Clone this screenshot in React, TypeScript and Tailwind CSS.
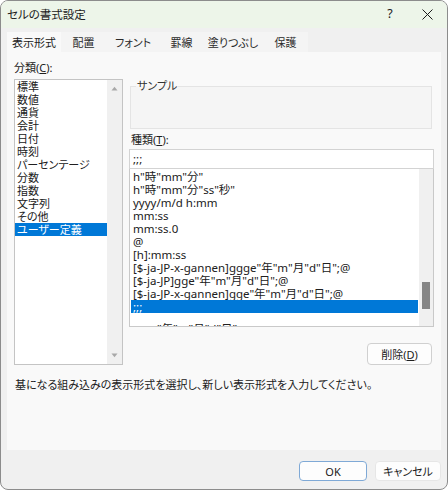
import React from "react";

const FONT = "font-['Noto_Sans','Noto_Sans_CJK_JP',sans-serif] [font-feature-settings:'palt']";

const TABS: { label: string; w: string }[] = [
  { label: "表示形式", w: "w-[54px]" },
  { label: "配置", w: "w-[45px]" },
  { label: "フォント", w: "w-[54px]" },
  { label: "罫線", w: "w-[43px]" },
  { label: "塗りつぶし", w: "w-[60px]" },
  { label: "保護", w: "w-[45px]" },
];

const CATEGORIES = [
  "標準",
  "数値",
  "通貨",
  "会計",
  "日付",
  "時刻",
  "パーセンテージ",
  "分数",
  "指数",
  "文字列",
  "その他",
  "ユーザー定義",
];

const FORMATS = [
  'h"時"mm"分"',
  'h"時"mm"分"ss"秒"',
  "yyyy/m/d h:mm",
  "mm:ss",
  "mm:ss.0",
  "@",
  "[h]:mm:ss",
  '[$-ja-JP-x-gannen]ggge"年"m"月"d"日";@',
  '[$-ja-JP]gge"年"m"月"d"日";@',
  '[$-ja-JP-x-gannen]gge"年"m"月"d"日";@',
  ";;;",
];

function Arrow({ up }: { up?: boolean }) {
  return (
    <svg width="7" height="5" viewBox="0 0 7 5" className="block">
      <path d={up ? "M0.5 4.5 L3.5 0.8 L6.5 4.5 Z" : "M0.5 0.5 L3.5 4.2 L6.5 0.5 Z"} fill="#a8a8a8" />
    </svg>
  );
}

export default function App() {
  return (
    <div
      className={`w-[448px] h-[490px] bg-[#f0f0f0] border border-[#8c8c8c] rounded-[8px] overflow-hidden flex flex-col text-[#202020] ${FONT}`}
    >
      {/* title bar */}
      <div className="h-[27px] shrink-0 bg-[#edf5e9] flex items-center pl-[6px]">
        <span className="flex-1 text-[11.5px] leading-none">セルの書式設定</span>
        <span className="w-[12px] text-center text-[12.5px] leading-none mr-[26px]">?</span>
        <svg width="11" height="11" viewBox="0 0 11 11" className="mr-[14px]">
          <path d="M0.5 0.5 L10.5 10.5 M10.5 0.5 L0.5 10.5" stroke="#1b1b1b" strokeWidth="1" />
        </svg>
      </div>

      <div className="flex-1 flex flex-col px-[6px] pt-[4px]">
        {/* tabs */}
        <div className="flex h-[20px]">
          {TABS.map((t, i) => (
            <div
              key={t.label}
              className={
                `${t.w} flex items-center justify-center text-[11px] leading-none ` +
                (i === 0 ? "bg-[#f9f9f9]" : "bg-[#f4f4f4] text-[#2a2a2a]")
              }
            >
              {t.label}
            </div>
          ))}
        </div>

        {/* panel */}
        <div className="w-[434px] h-[398px] bg-[#f9f9f9] pl-[7px] pr-[7px] flex flex-col">
          <div className="flex">
            {/* left: category */}
            <div className="w-[109px] flex flex-col">
              <div className="mt-[9px] h-[14px] leading-[14px] text-[11px]">
                分類(<span className="underline">C</span>):
              </div>
              <div className="mt-[4px] h-[286px] bg-white border border-[#c4c4c4] flex">
                <div className="flex-1 flex flex-col text-[11px]">
                  {CATEGORIES.map((c, i) => (
                    <div
                      key={c}
                      className={
                        "h-[13px] leading-[13px] pl-[2px] whitespace-nowrap " +
                        (i === CATEGORIES.length - 1 ? "bg-[#0078d7] text-white" : "")
                      }
                    >
                      {c}
                    </div>
                  ))}
                </div>
                <div className="w-[15px] bg-[#f0f0f0] flex flex-col items-center justify-between py-[6px]">
                  <Arrow up />
                  <Arrow />
                </div>
              </div>
            </div>

            {/* right: sample + type */}
            <div className="w-[305px] ml-[6px] flex flex-col">
              <fieldset className="mt-[27px] h-[50px] ml-[1px] mr-[2px] border border-[#e4e4e4] bg-[#f5f5f5] px-[5px]">
                <legend className="px-[1px] text-[11px] leading-[14px] text-[#333]">サンプル</legend>
              </fieldset>
              <div className="mt-[4px] h-[14px] leading-[14px] text-[11px] pl-[2px]">
                種類(<span className="underline">T</span>):
              </div>
              <div className="mt-[2px] h-[20px] bg-white border border-[#d3d3d3] flex items-center pl-[3px] text-[11.5px]">
                ;;;
              </div>
              <div className="h-[158px] bg-white border border-t-0 border-[#c9c9c9] flex overflow-hidden">
                <div className="flex-1 flex flex-col pt-[1px] px-[1px] text-[11.5px] overflow-hidden">
                  {FORMATS.map((f, i) => (
                    <div
                      key={f}
                      className={
                        "h-[13px] leading-[13px] pl-[2px] whitespace-nowrap shrink-0 " +
                        (i === FORMATS.length - 1 ? "bg-[#0078d7] text-white" : "")
                      }
                    >
                      {f}
                    </div>
                  ))}
                  <div className="mt-[9px] h-[13px] leading-[13px] pl-[2px] whitespace-nowrap shrink-0">
                    yyyy"年"m"月"d"日"
                  </div>
                </div>
                <div className="w-[14px] bg-[#f0f0f0] flex flex-col items-center pt-[113px]">
                  <div className="w-[8px] h-[27px] bg-[#858585]" />
                </div>
              </div>
              <div className="flex justify-end mt-[16px] pr-[2px]">
                <button className="w-[65px] h-[22px] bg-[#fdfdfd] border border-[#d0d0d0] rounded-[4px] text-[11px] leading-none">
                  削除(<span className="underline">D</span>)
                </button>
              </div>
            </div>
          </div>

          <div className="mt-[13px] pl-[1px] h-[14px] leading-[14px] text-[11px] whitespace-nowrap">
            基になる組み込みの表示形式を選択し、新しい表示形式を入力してください。
          </div>
        </div>

        {/* dialog buttons */}
        <div className="flex justify-end gap-[8px] mt-[11px]">
          <button className="w-[68px] h-[20px] bg-[#fdfdfd] border border-[#7fa9d6] rounded-[4px] text-[11px] leading-none">
            OK
          </button>
          <button className="w-[66px] h-[20px] bg-[#fdfdfd] border border-[#e6e6e6] rounded-[4px] text-[11px] leading-none">
            キャンセル
          </button>
        </div>
      </div>
    </div>
  );
}
